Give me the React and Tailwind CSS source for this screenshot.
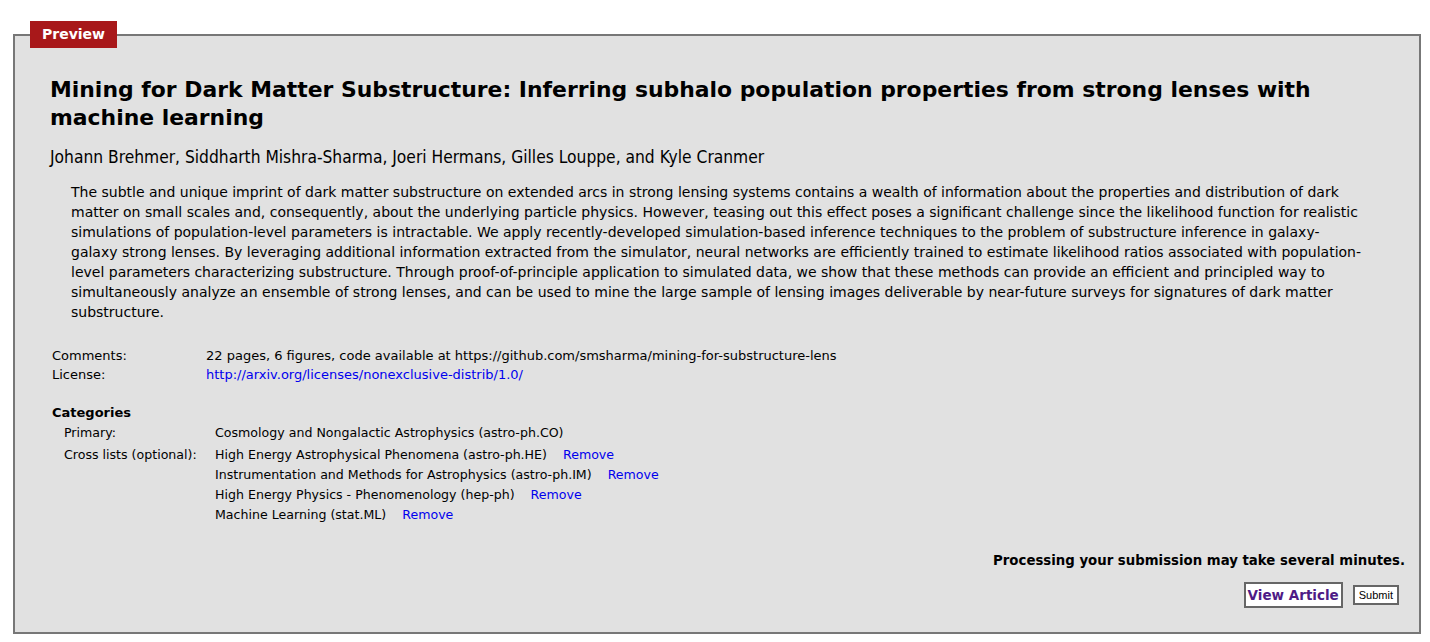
import React from "react";

const crossLists = [
  "High Energy Astrophysical Phenomena (astro-ph.HE)",
  "Instrumentation and Methods for Astrophysics (astro-ph.IM)",
  "High Energy Physics - Phenomenology (hep-ph)",
  "Machine Learning (stat.ML)",
];

const abstract =
  "The subtle and unique imprint of dark matter substructure on extended arcs in strong lensing systems contains a wealth of information about the properties and distribution of dark matter on small scales and, consequently, about the underlying particle physics. However, teasing out this effect poses a significant challenge since the likelihood function for realistic simulations of population-level parameters is intractable. We apply recently-developed simulation-based inference techniques to the problem of substructure inference in galaxy-galaxy strong lenses. By leveraging additional information extracted from the simulator, neural networks are efficiently trained to estimate likelihood ratios associated with population-level parameters characterizing substructure. Through proof-of-principle application to simulated data, we show that these methods can provide an efficient and principled way to simultaneously analyze an ensemble of strong lenses, and can be used to mine the large sample of lensing images deliverable by near-future surveys for signatures of dark matter substructure.";

const App = () => {
  return (
    <div className="min-h-[642px] bg-white pt-[21px] pl-[13px] font-['DejaVu_Sans',sans-serif] text-black">
      <fieldset className="w-[1408px] h-[613px] border-2 border-[#777777] bg-[#e1e1e1] pl-[35px] pr-[14px] m-0">
        <legend className="-ml-[20px] bg-[#a8181a] text-white font-bold text-[14px] leading-[27px] px-[12px]">
          Preview
        </legend>

        <h1 className="mt-[28px] text-[21.9px] leading-[28px] font-bold pr-[40px]">
          Mining for Dark Matter Substructure: Inferring subhalo population properties from strong lenses with machine learning
        </h1>
        <p className="mt-[15px] text-[17.25px] leading-[20px] [font-stretch:condensed] font-['DejaVu_Sans_Condensed','DejaVu_Sans',sans-serif]">
          Johann Brehmer, Siddharth Mishra-Sharma, Joeri Hermans, Gilles Louppe, and Kyle Cranmer
        </p>

        {/* abstract */}
        <p className="mt-[15px] ml-[21px] mr-[40px] text-[14px] leading-[20px]">{abstract}</p>

        <table className="mt-[24px] text-[13px] leading-[19px] ml-[2px]">
          <tbody>
            <tr>
              <td className="w-[154px] align-top">Comments:</td>
              <td>22 pages, 6 figures, code available at https://github.com/smsharma/mining-for-substructure-lens</td>
            </tr>
            <tr>
              <td className="align-top">License:</td>
              <td>
                <a href="#" className="text-[#0000ee]">
                  http://arxiv.org/licenses/nonexclusive-distrib/1.0/
                </a>
              </td>
            </tr>
          </tbody>
        </table>

        <div className="mt-[19px] ml-[2px] text-[12.6px]">
          <div className="font-bold text-[13px] leading-[19px]">Categories</div>
          <div className="ml-[12px] mt-[1px] flex leading-[20px]">
            <div className="w-[151px]">Primary:</div>
            <div>Cosmology and Nongalactic Astrophysics (astro-ph.CO)</div>
          </div>
          <div className="ml-[12px] flex leading-[20px] mt-[2px]">
            <div className="w-[151px]">Cross lists (optional):</div>
            <div className="flex flex-col">
              {crossLists.map((c) => (
                <div key={c} className="h-[20px]">
                  {c}
                  <a href="#" className="text-[#0000ee] ml-[16px]">
                    Remove
                  </a>
                </div>
              ))}
            </div>
          </div>
        </div>

        <div className="mt-[26px] text-right font-bold text-[13.3px] leading-[20px]">
          Processing your submission may take several minutes.
        </div>
        <div className="mt-[11px] flex justify-end items-center gap-[10px] pr-[6px]">
          <button className="bg-white border-2 border-[#666666] text-[#4e1a86] font-bold text-[13.5px] leading-[22px] px-[2px]">
            View Article
          </button>
          <button className="bg-white border-2 border-[#666666] text-[11px] leading-[16px] px-[4px] font-['Liberation_Sans',sans-serif]">
            Submit
          </button>
        </div>
      </fieldset>
    </div>
  );
};

export default App;
